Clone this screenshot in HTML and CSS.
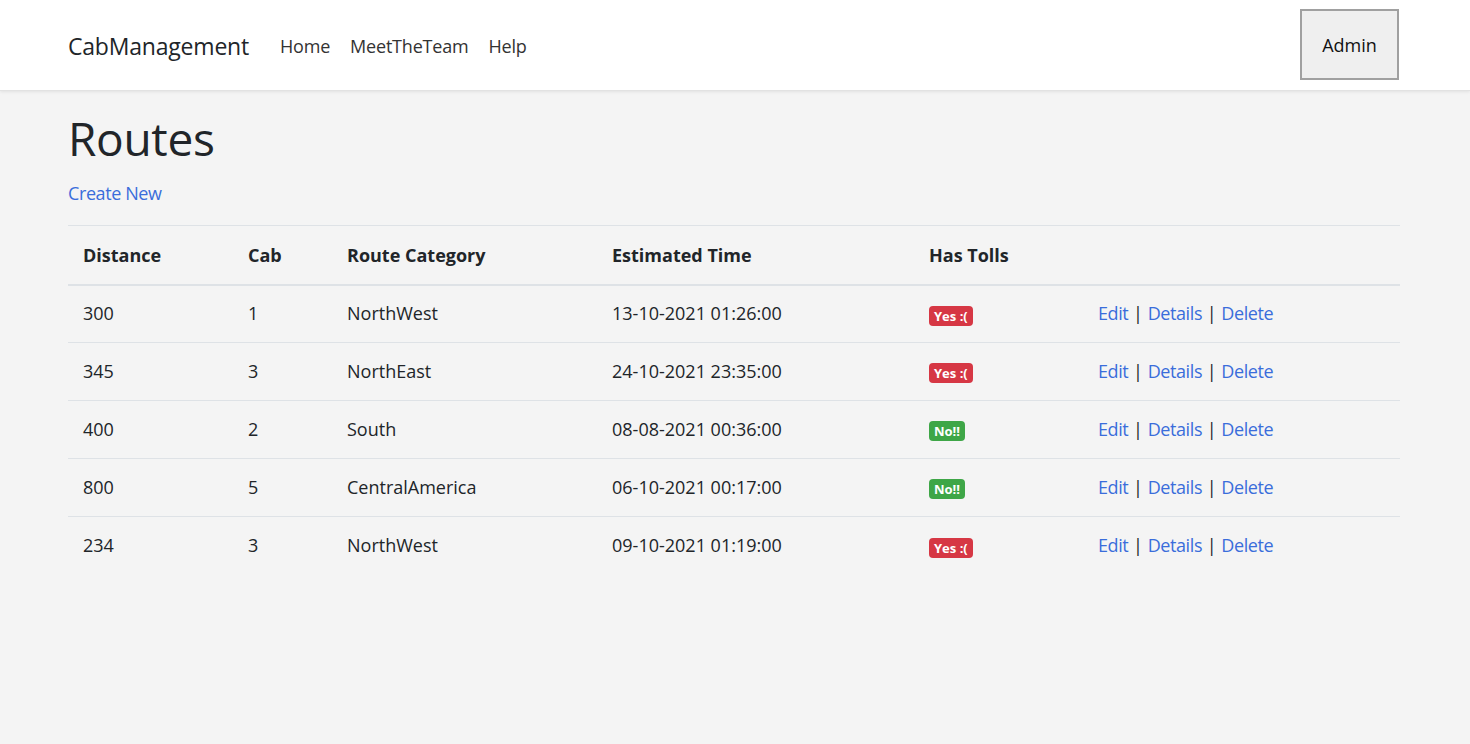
FILE: index.html
```html
<!DOCTYPE html>
<html lang="en">
<head>
<meta charset="utf-8">
<title>Routes - CabManagement</title>
<link rel="stylesheet" href="styles.css">
</head>
<body>
<header class="navbar">
  <div class="container nav-inner">
    <a class="brand" href="#">CabManagement</a>
    <nav class="nav-links">
      <a href="#">Home</a>
      <a href="#">MeetTheTeam</a>
      <a href="#">Help</a>
    </nav>
    <button class="admin-btn">Admin</button>
  </div>
</header>
<main class="container">
  <h1 class="title">Routes</h1>
  <p class="create"><a href="#">Create New</a></p>
  <table class="table">
    <colgroup>
      <col class="c1"><col class="c2"><col class="c3"><col class="c4"><col class="c5"><col class="c6">
    </colgroup>
    <thead>
      <tr><th>Distance</th><th>Cab</th><th>Route Category</th><th>Estimated Time</th><th>Has Tolls</th><th></th></tr>
    </thead>
    <tbody>
      <tr><td>300</td><td>1</td><td>NorthWest</td><td>13-10-2021 01:26:00</td><td><span class="badge yes">Yes :(</span></td><td class="actions"><a href="#">Edit</a> | <a href="#">Details</a> | <a href="#">Delete</a></td></tr>
      <tr><td>345</td><td>3</td><td>NorthEast</td><td>24-10-2021 23:35:00</td><td><span class="badge yes">Yes :(</span></td><td class="actions"><a href="#">Edit</a> | <a href="#">Details</a> | <a href="#">Delete</a></td></tr>
      <tr><td>400</td><td>2</td><td>South</td><td>08-08-2021 00:36:00</td><td><span class="badge no">No!!</span></td><td class="actions"><a href="#">Edit</a> | <a href="#">Details</a> | <a href="#">Delete</a></td></tr>
      <tr><td>800</td><td>5</td><td>CentralAmerica</td><td>06-10-2021 00:17:00</td><td><span class="badge no">No!!</span></td><td class="actions"><a href="#">Edit</a> | <a href="#">Details</a> | <a href="#">Delete</a></td></tr>
      <tr><td>234</td><td>3</td><td>NorthWest</td><td>09-10-2021 01:19:00</td><td><span class="badge yes">Yes :(</span></td><td class="actions"><a href="#">Edit</a> | <a href="#">Details</a> | <a href="#">Delete</a></td></tr>
    </tbody>
  </table>
</main>
</body>
</html>
```
FILE: styles.css
```css
* { box-sizing: border-box; }
html, body { margin: 0; padding: 0; }
body {
  background: #f4f4f4;
  color: #212529;
  font-family: "Open Sans", "Noto Sans", "Liberation Sans", sans-serif;
  font-size: 18px;
  line-height: 1.5;
}
a { color: #3a6ddb; text-decoration: none; }
.container {
  width: 1332px;
  margin: 0 auto;
  position: relative;
  left: -1px;
}
.navbar {
  background: #fff;
  height: 91px;
  box-shadow: 0 1px 3px rgba(0,0,0,0.08);
  border-bottom: 1px solid #e2e2e2;
}
.nav-inner {
  display: flex;
  align-items: center;
  height: 90px;
}
.brand {
  color: #212529;
  font-size: 23px;
  margin-right: 21px;
  letter-spacing: -0.2px;
  padding-top: 2px;
}
.nav-links { display: flex; gap: 0; flex: 1; padding-top: 2px; }
.nav-links a {
  color: #333;
  font-size: 18px;
  padding: 0 10px;
  letter-spacing: -0.2px;
}
.admin-btn {
  width: 99px;
  height: 71px;
  margin-top: -2px;
  margin-right: 1px;
  padding-top: 3px;
  background: #efefef;
  border: 2px solid #a0a0a0;
  font-family: inherit;
  font-size: 18px;
  color: #111;
}
.title {
  font-size: 46px;
  font-weight: 500;
  margin: 20px 0 0;
  line-height: 1.2;
  letter-spacing: -0.3px;
}
.create { margin: 14px 0 18px; font-size: 18px; }
.actions a, .create a { letter-spacing: -0.4px; }
.table {
  width: 100%;
  border-collapse: collapse;
  table-layout: fixed;
}
.c1 { width: 165px; }
.c2 { width: 99px; }
.c3 { width: 265px; }
.c4 { width: 317px; }
.c5 { width: 169px; }
.c6 { width: 317px; }
.table th, .table td {
  text-align: left;
  padding: 0 15px;
  height: 58px;
  border-bottom: 1px solid #dee2e6;
  vertical-align: middle;
  white-space: nowrap;
}
.table thead th {
  height: 59px;
  padding-top: 1px;
  border-top: 1px solid #dee2e6;
  border-bottom: 2px solid #dee2e6;
  font-weight: 700;
}
.table tbody tr:last-child td { border-bottom: none; }
.badge {
  display: inline-block;
  color: #fff;
  font-size: 13px;
  font-weight: 700;
  line-height: 1;
  padding: 4px 5px 3px;
  border-radius: 4px;
  vertical-align: middle;
}
.yes { background: #d63744; }
.no { background: #3ea647; }
.actions { color: #212529; }
```
